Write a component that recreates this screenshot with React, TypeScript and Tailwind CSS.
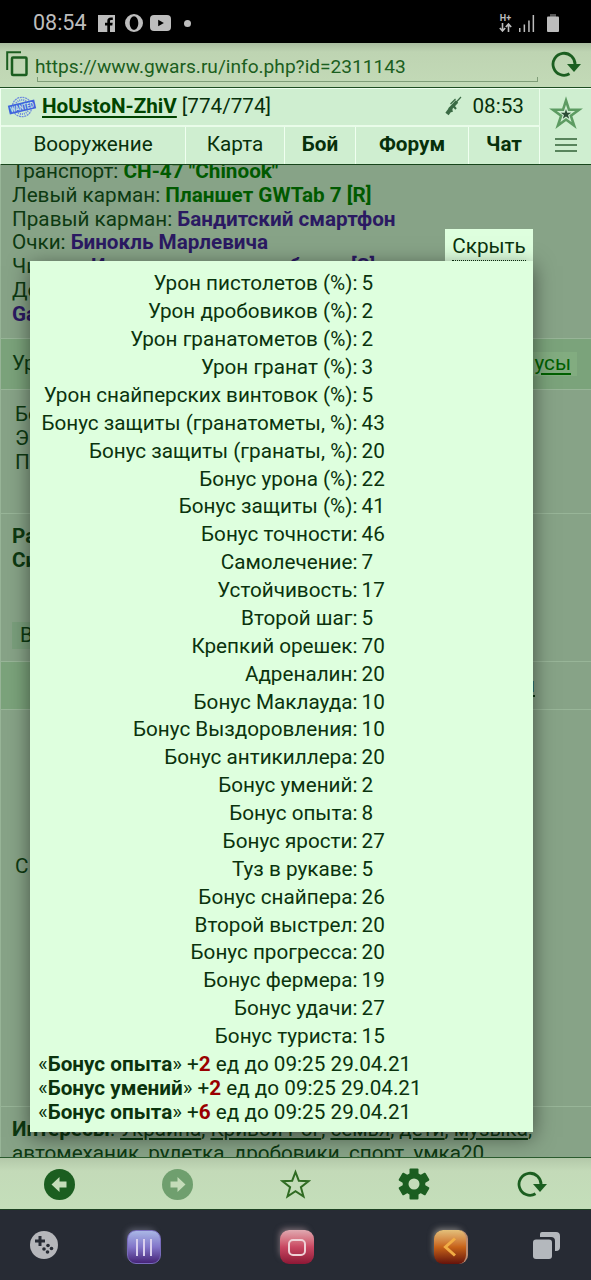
import type { ReactNode } from "react";

interface Bonus {
  label: string;
  value: number;
}

interface Effect {
  name: string;
  amount: number;
}

const bonuses: Bonus[] = [
  { label: "Урон пистолетов (%)", value: 5 },
  { label: "Урон дробовиков (%)", value: 2 },
  { label: "Урон гранатометов (%)", value: 2 },
  { label: "Урон гранат (%)", value: 3 },
  { label: "Урон снайперских винтовок (%)", value: 5 },
  { label: "Бонус защиты (гранатометы, %)", value: 43 },
  { label: "Бонус защиты (гранаты, %)", value: 20 },
  { label: "Бонус урона (%)", value: 22 },
  { label: "Бонус защиты (%)", value: 41 },
  { label: "Бонус точности", value: 46 },
  { label: "Самолечение", value: 7 },
  { label: "Устойчивость", value: 17 },
  { label: "Второй шаг", value: 5 },
  { label: "Крепкий орешек", value: 70 },
  { label: "Адреналин", value: 20 },
  { label: "Бонус Маклауда", value: 10 },
  { label: "Бонус Выздоровления", value: 10 },
  { label: "Бонус антикиллера", value: 20 },
  { label: "Бонус умений", value: 2 },
  { label: "Бонус опыта", value: 8 },
  { label: "Бонус ярости", value: 27 },
  { label: "Туз в рукаве", value: 5 },
  { label: "Бонус снайпера", value: 26 },
  { label: "Второй выстрел", value: 20 },
  { label: "Бонус прогресса", value: 20 },
  { label: "Бонус фермера", value: 19 },
  { label: "Бонус удачи", value: 27 },
  { label: "Бонус туриста", value: 15 },
];

const effects: Effect[] = [
  { name: "Бонус опыта", amount: 2 },
  { name: "Бонус умений", amount: 2 },
  { name: "Бонус опыта", amount: 6 },
];

const StatusBar = () => (
  <div className="flex h-[43px] shrink-0 items-center bg-black pl-[33px] pr-[32px] pt-[3px] text-[#bdbdbd]">
    <span className="w-[65px] text-[21.5px] leading-none">08:54</span>
    <svg className="h-[17px] w-[17px]" viewBox="0 0 17 17" fill="currentColor">
      <path d="M0 0h17v17h-5v-6.5h2.300l.4-2.700H12V6.200c0-.8.3-1.300 1.400-1.300h1.400V2.500c-.3 0-1.100-.1-2-.1-2.200 0-3.500 1.200-3.500 3.500v1.900H7v2.700h2.300V17H0z" />
    </svg>
    <svg className="ml-[10px] h-[18px] w-[18px]" viewBox="0 0 18 18" fill="currentColor">
      <path
        fillRule="evenodd"
        d="M9 0a9 9 0 1 0 0 18A9 9 0 0 0 9 0zm0 2.200c2.500 0 4.300 3 4.300 6.800S11.500 15.800 9 15.800 4.700 12.800 4.700 9 6.500 2.200 9 2.200z"
      />
    </svg>
    <svg className="ml-[7px] h-[16px] w-[21px]" viewBox="0 0 21 16">
      <rect width="21" height="16" rx="4" fill="currentColor" />
      <path d="M8.200 4.700v6.600l5.700-3.300z" fill="#000" />
    </svg>
    <span className="ml-[13px] h-[7px] w-[7px] rounded-full bg-current" />
    <div className="ml-auto flex items-center">
      <div className="flex w-[13px] flex-col items-center">
        <span className="text-[9px] font-bold leading-[9px]">H+</span>
        <svg className="h-[9px] w-[13px]" viewBox="0 0 13 9" fill="none" stroke="currentColor" strokeWidth="1.600">
          <path d="M3.500 0v8M.8 5l2.700 3 2.700-3M9.500 9V1M6.800 4l2.700-3 2.700 3" />
        </svg>
      </div>
      <svg className="ml-[7px] h-[17px] w-[16px]" viewBox="0 0 16 17" fill="currentColor">
        <path d="M0 13h1.500v4H0zM4.600 9.500h1.500V17H4.600zM9.200 5.500h1.500V17H9.200zM13.600 0h1.500v17h-1.500z" />
      </svg>
      <svg className="ml-[12px] h-[18px] w-[12px]" viewBox="0 0 12 18">
        <path d="M3 0h6v3H3z" fill="#555" />
        <rect y="2.500" width="12" height="15.500" rx="1" fill="currentColor" />
      </svg>
    </div>
  </div>
);

const ReloadIcon = ({ className }: { className: string }) => (
  <svg className={className} viewBox="0 0 30 26" fill="none">
    <path d="M18.500 22.800A11 11 0 1 1 24 14" stroke="#1b5e20" strokeWidth="2.800" />
    <path d="M16 13h14l-7 8z" fill="#1b5e20" />
  </svg>
);

const AddressBar = () => (
  <div className="flex h-[45px] shrink-0 border-b border-b-[#1d4d22] bg-linear-to-b from-[#a9bd9f] via-[#bed4b2] via-20% to-[#c3dab7]">
    <svg className="ml-[6px] mt-[8px] h-[26px] w-[22px]" viewBox="0 0 22 26" fill="none" stroke="#1b5e20">
      <path d="M1.200 19V1.300H15" strokeWidth="2" />
      <rect x="6" y="6.500" width="14.500" height="17.500" rx="1" strokeWidth="2.500" />
    </svg>
    <div className="ml-[8px] mt-[9px] h-[30px] w-[502px] text-[19.140px] leading-[30px] text-[#1b5e20]">
      <div className="-ml-px h-[29px] whitespace-nowrap">https://www.gwars.ru/info.php?id=2311143</div>
      <div className="-mt-[4px] ml-px h-[5px] border border-t-0 border-[#7f9d78]" />
    </div>
    <ReloadIcon className="ml-[13px] mt-[8px] h-[26px] w-[30px]" />
  </div>
);

const TabCell = ({ className, children }: { className: string; children: ReactNode }) => (
  <div className={`flex items-center justify-center border-r border-[#f0fff0] pb-[2px] ${className}`}>{children}</div>
);

const WantedStamp = () => (
  <svg className="h-[24px] w-[30px]" viewBox="0 0 30 24">
    <g fill="none" stroke="#6d8ade">
      <circle cx="15" cy="12" r="9.700" strokeWidth="1.300" strokeDasharray="2 .7" />
      <circle cx="15" cy="12" r="7" strokeWidth="2" strokeDasharray="1 1" />
    </g>
    <g transform="rotate(-13 15 12)">
      <rect x="1.500" y="7.500" width="27" height="9" fill="#3f63dc" />
      <text x="15" y="14.800" textAnchor="middle" fontSize="8" fontWeight="700" fill="#cbe8e5" textLength="24" lengthAdjust="spacingAndGlyphs">
        WANTED
      </text>
    </g>
  </svg>
);

const RifleIcon = () => (
  <svg className="h-[20px] w-[17px]" viewBox="0 0 17 20" fill="none" stroke="#3b6b45">
    <path d="M2 18L6 12.500" strokeWidth="4" />
    <path d="M4.500 13.500L12 5.500" strokeWidth="3.300" />
    <path d="M10 7.500l6-6.500M5.500 8l5-5" strokeWidth="1.200" />
    <path d="M8.500 10l2.500 3M6 13l1 3" strokeWidth="2" />
  </svg>
);

const GameHeader = () => (
  <div className="flex h-[77px] shrink-0 border-b border-l border-t border-b-[#17451b] border-l-[#f0fff0] border-t-[#f0fff0] bg-[#cfeed0] text-[20.700px] text-[#07300b]">
    <div className="flex w-[539px] flex-col">
      <div className="flex h-[38px] items-center border-b-2 border-r border-[#e9fce9] pb-px pl-[6px] pr-[15px]">
        <WantedStamp />
        <a href="#" className="ml-[5px] font-bold text-[#004400] underline decoration-2 underline-offset-[3px]">
          HoUstoN-ZhiV
        </a>
        <span className="ml-[5px]">[774/774]</span>
        <div className="ml-auto flex items-center gap-[10px]">
          <RifleIcon />
          <span>08:53</span>
        </div>
      </div>
      <div className="flex h-[37px]">
        <TabCell className="w-[185px]">Вооружение</TabCell>
        <TabCell className="w-[99px]">Карта</TabCell>
        <TabCell className="w-[71px] font-bold">Бой</TabCell>
        <TabCell className="w-[113px] font-bold">Форум</TabCell>
        <TabCell className="w-[71px] font-bold">Чат</TabCell>
      </div>
    </div>
    <div className="flex flex-1 flex-col items-center">
      <svg className="mt-[7px] h-[34px] w-[34px]" viewBox="0 0 34 34">
        <path
          d="M17 4.500l3 9.300h10l-8.100 6 3.200 9.700L17 23.500l-8.100 6 3.200-9.700-8.100-6h10z"
          fill="none"
          stroke="#5d9b62"
          strokeWidth="2.600"
        />
        <path d="M17 13l1.200 3.700h4l-3.200 2.300 1.200 3.700L17 20.400l-3.200 2.300L15 19l-3.200-2.300h4z" fill="#2c4c35" />
      </svg>
      <div className="mt-[8px] flex w-[22px] flex-col gap-[4px]">
        <span className="h-[2px] bg-[#58845c]" />
        <span className="h-[2px] bg-[#58845c]" />
        <span className="h-[2px] bg-[#58845c]" />
      </div>
    </div>
  </div>
);

// Profile page that stays dimmed behind the bonus window
const ProfilePage = () => (
  <div className="flex flex-col border-l border-[#98b598] whitespace-nowrap text-[20.700px] leading-[23.800px] text-[#0d3a11]">
    <div className="-mt-[5px] h-[179px] border-b border-[#98b598] pl-[11px]">
      <p>Транспорт: <b className="text-[#005a00]">CH-47 "Chinook"</b></p>
      <p>Левый карман: <b className="text-[#005a00]">Планшет GWTab 7 [R]</b></p>
      <p>Правый карман: <b className="text-[#2b1a62]">Бандитский смартфон</b></p>
      <p>Очки: <b className="text-[#2b1a62]">Бинокль Марлевича</b></p>
      <p className="flex font-bold text-[#2b1a62]">
        <span className="w-[79px] font-normal text-[#0d3a11]">Чи</span>
        <span className="w-[198px]">И</span>
        <span className="w-[62px]">б</span>
        <span>[S]</span>
      </p>
      <p>До</p>
      <p><b className="text-[#2b1a62]">Ga</b></p>
    </div>
    <div className="flex h-[51px] items-center justify-between border-b border-[#98b598] bg-[#7ba37b] pl-[11px] pr-[14px]">
      <span>Ур</span>
      <a href="#" className="bg-[#82ac80] px-[6px] text-[#006000] underline underline-offset-[3px]">усы</a>
    </div>
    <div className="h-[124px] border-b border-[#98b598] pl-[14px] pt-[13px]">
      <p>Бо</p>
      <p>Э</p>
      <p>П</p>
    </div>
    <div className="h-[148px] border-b border-[#98b598] pl-[11px] pt-[11px]">
      <p className="font-bold">Ра</p>
      <p className="font-bold">Си</p>
      <div className="mt-[49px] h-[27px] w-[160px] bg-[#7a9f7c] pl-[8px] leading-[26px]">В</div>
    </div>
    <div className="flex h-[48px] border-b border-[#98b598]">
      <div className="w-[260px] bg-[#7ba37b]" />
      <div className="flex flex-1 items-center justify-end pr-[56px]">
        <span className="underline underline-offset-[3px]">и</span>
      </div>
    </div>
    <div className="h-[397px] border-b border-[#98b598] pl-[14px] pt-[145px]">
      <p>С</p>
    </div>
    <div className="pl-[11px] pt-[11px]">
      <p>
        <b>Интересы</b>: <u>Украина</u>, <u>Кривой Рог</u>, <u>семья</u>, <u>дети</u>, <u>музыка</u>,
      </p>
      <p>автомеханик, рулетка, дробовики, спорт, умка20</p>
    </div>
  </div>
);

const BonusWindow = () => (
  <div className="absolute left-[30px] top-[64px] flex w-[503px] flex-col items-end whitespace-nowrap text-[20.700px] text-[#0a330d]">
    <div className="h-[32px] w-[88px] bg-[#deffde] px-[7px] pt-[3px]">
      <a href="#" className="block h-[29px] border-b border-dotted border-[#0a330d] text-center leading-[28px]">Скрыть</a>
    </div>
    <div className="h-[871px] w-full bg-[#deffde] pt-[9px] shadow-[0_5px_20px_rgba(0,0,0,0.5)]">
      {bonuses.map((bonus) => (
        <div key={bonus.label} className="flex h-[27.890px] items-center">
          <span className="w-[327.500px] text-right">{bonus.label}:</span>
          <span className="ml-[4px]">{bonus.value}</span>
        </div>
      ))}
      <div className="pl-[8px] pt-[2.500px] leading-[23.800px]">
        {effects.map((effect, i) => (
          <p key={i}>
            «<b>{effect.name}</b>» +<b className="text-[#990000]">{effect.amount}</b> ед до 09:25 29.04.21
          </p>
        ))}
      </div>
    </div>
  </div>
);

const ToolbarButton = ({ children }: { children: ReactNode }) => (
  <button type="button" className="flex flex-1 items-center justify-center">
    {children}
  </button>
);

const BrowserToolbar = () => (
  <div className="flex h-[53px] shrink-0 border-b border-t border-b-[#1d4322] border-t-[#2a5b2e] bg-linear-to-b from-[#b3c8a9] via-[#c3dab8] via-25% to-[#c4dfba] pt-px">
    <ToolbarButton>
      <svg className="h-[31px] w-[31px]" viewBox="0 0 31 31">
        <circle cx="15.500" cy="15.500" r="15.500" fill="#1b5e20" />
        <path d="M7.500 15.500l8-7.500v4.500h7v6h-7V23z" fill="#c4dcb9" />
      </svg>
    </ToolbarButton>
    <ToolbarButton>
      <svg className="h-[31px] w-[31px]" viewBox="0 0 31 31">
        <circle cx="15.500" cy="15.500" r="15.500" fill="#6f9f6e" />
        <path d="M23.500 15.500l-8-7.500v4.500h-7v6h7V23z" fill="#c4dcb9" />
      </svg>
    </ToolbarButton>
    <ToolbarButton>
      <svg className="h-[31px] w-[31px]" viewBox="0 0 31 31">
        <path
          d="M15.500 3l3.300 8.700 9.700.5-7.600 6 2.600 9.300-8-5.300-8 5.300 2.600-9.300-7.600-6 9.700-.5z"
          fill="none"
          stroke="#2f6b22"
          strokeWidth="2"
        />
      </svg>
    </ToolbarButton>
    <ToolbarButton>
      <svg className="h-[32px] w-[32px]" viewBox="-16 -16 32 32" fill="#1b5e20">
        <rect x="-4.500" y="-15.500" width="9" height="31" rx="1" />
        <rect x="-4.500" y="-15.500" width="9" height="31" rx="1" transform="rotate(60)" />
        <rect x="-4.500" y="-15.500" width="9" height="31" rx="1" transform="rotate(120)" />
        <circle r="11.300" />
        <circle r="5.500" fill="#c4dcb9" />
      </svg>
    </ToolbarButton>
    <ToolbarButton>
      <ReloadIcon className="h-[26px] w-[30px]" />
    </ToolbarButton>
  </div>
);

const NavigationBar = () => (
  <div className="flex h-[70px] shrink-0 items-center bg-[#272b34] pl-[30px]">
    <svg className="h-[28px] w-[28px]" viewBox="0 0 28 28">
      <circle cx="14" cy="14" r="14" fill="#b5b6ba" />
      <path d="M10 5v10M5 10h10" stroke="#272b34" strokeWidth="3" />
      <g fill="#272b34">
        <circle cx="18" cy="14.500" r="1.800" />
        <circle cx="14" cy="18" r="1.800" />
        <circle cx="21.500" cy="17.500" r="1.800" />
        <circle cx="17.500" cy="21" r="1.800" />
      </g>
    </svg>
    <div className="ml-[69px] mt-[4px] flex h-[34px] w-[34px] items-center justify-center gap-[5px] rounded-[9px] border border-[#786bbb] bg-linear-to-b from-[#a9b7e5] via-[#8275c9] to-[#462378] shadow-[-3px_-4px_6px_-3px_rgba(200,200,230,0.35)]">
      <span className="h-[17px] w-[2px] bg-[#d9cfee]" />
      <span className="h-[17px] w-[2px] bg-[#d9cfee]" />
      <span className="h-[17px] w-[2px] bg-[#d9cfee]" />
    </div>
    <div className="ml-[119px] mt-[4px] flex h-[34px] w-[34px] items-center justify-center rounded-[9px] bg-linear-to-b from-[#dfa9b1] via-[#c94762] to-[#8d1736] shadow-[-3px_-4px_6px_-3px_rgba(240,200,205,0.5)]">
      <span className="h-[17px] w-[18px] rounded-[5px] border-2 border-[#eed1d6]" />
    </div>
    <div className="ml-[120px] mt-[4px] flex h-[34px] w-[34px] items-center justify-center rounded-[9px] border-r-2 border-[#bb8c72] bg-linear-to-b from-[#e3c07a] via-[#c76318] to-[#64120b] shadow-[-3px_-4px_6px_-3px_rgba(240,230,215,0.5)]">
      <svg className="h-[20px] w-[14px]" viewBox="0 0 14 20" fill="none" stroke="#f1ad45" strokeWidth="3">
        <path d="M12 1.500L2.500 10l9.500 8.500" />
      </svg>
    </div>
    <svg className="ml-[65px] h-[27px] w-[27px]" viewBox="0 0 27 27" fill="#b4b8bd">
      <path d="M9 0h14a4 4 0 0 1 4 4v11a4 4 0 0 1-4 4h-1V9a4 4 0 0 0-4-4H7V2a2 2 0 0 1 2-2z" />
      <rect y="7.500" width="19" height="19.500" rx="3" />
    </svg>
  </div>
);

const App = () => {
  return (
    <div className="flex h-[1280px] w-[591px] flex-col overflow-hidden bg-black font-['Roboto',sans-serif]">
      <StatusBar />
      <AddressBar />
      <GameHeader />
      <div className="relative h-[992px] shrink-0 overflow-hidden bg-[#87a387]">
        <ProfilePage />
        <BonusWindow />
      </div>
      <BrowserToolbar />
      <NavigationBar />
    </div>
  );
};

export default App;
